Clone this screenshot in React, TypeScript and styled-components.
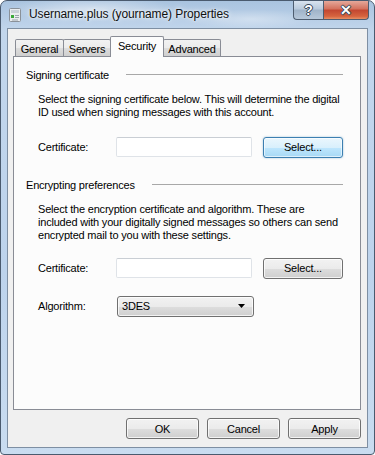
import React from "react";
import styled, { createGlobalStyle, css } from "styled-components";

const Global = createGlobalStyle`
  html, body { margin: 0; padding: 0; background: #ffffff; }
  body { font-family: "Liberation Sans", Arial, sans-serif; }
  * { box-sizing: border-box; }
`;

const Window = styled.div`
  width: 375px;
  height: 455px;
  border: 1px solid #4a5a6e;
  border-radius: 7px 7px 4px 4px;
  background: linear-gradient(180deg, #a9c3df 0px, #c2d6ec 30px, #bdd3ec 60%, #c9dcf0 100%);
  padding: 0 6px 6px 6px;
  display: flex;
  flex-direction: column;
  overflow: hidden;
`;

const TitleBar = styled.div`
  height: 27px;
  display: flex;
  align-items: flex-start;
  background: radial-gradient(ellipse 120px 18px at 90px 8px, rgba(255,255,255,0.45), rgba(255,255,255,0) 70%),
    radial-gradient(ellipse 90px 14px at 250px 18px, rgba(255,255,255,0.35), rgba(255,255,255,0) 70%);
  margin: 0 -6px;
  padding: 0 6px;
`;

const AppIcon = styled.svg`
  width: 16px;
  height: 16px;
  margin-top: 6px;
  flex-shrink: 0;
`;

const Title = styled.div`
  margin-left: 6px;
  margin-top: 6px;
  font-size: 12px;
  line-height: 15px;
  letter-spacing: -0.1px;
  color: #101010;
  white-space: nowrap;
  text-shadow: 0 0 6px rgba(255,255,255,0.9), 0 0 3px rgba(255,255,255,0.9);
`;

const CaptionButtons = styled.div`
  margin-left: auto;
  display: flex;
  margin-right: -1px;
`;

const CaptionButton = styled.div<{ $kind: "help" | "close" }>`
  height: 19px;
  display: flex;
  align-items: center;
  justify-content: center;
  border: 1px solid #4e5d70;
  border-top: none;
  ${(p) =>
    p.$kind === "help"
      ? css`
          width: 30px;
          border-radius: 0 0 0 4px;
          border-right: none;
          background: linear-gradient(180deg, #d8e3ef 0%, #b9cadc 45%, #9fb3c9 50%, #b7c8da 100%);
        `
      : css`
          width: 46px;
          border-radius: 0 0 4px 0;
          background: linear-gradient(180deg, #e5a89a 0%, #d3705c 45%, #c24630 50%, #d6643f 85%, #e89065 100%);
        `}
`;

const CaptionGlyph = styled.span`
  font-family: "Liberation Sans", Arial, sans-serif;
  font-weight: bold;
  font-size: 14px;
  line-height: 14px;
  color: #ffffff;
  text-shadow: 0 0 1px #2a3a4c, 1px 0 0 #3a4a5c, -1px 0 0 #3a4a5c, 0 1px 0 #3a4a5c, 0 -1px 0 #3a4a5c;
`;

const Client = styled.div`
  flex: 1;
  border: 1px solid #7e8fa3;
  background: #f0f0f0;
  padding: 7px 6px 6px 5px;
  display: flex;
  flex-direction: column;
  font-size: 11px;
  letter-spacing: -0.2px;
  color: #000;
`;

const TabRow = styled.div`
  height: 20px;
  display: flex;
  align-items: flex-end;
  padding-left: 2px;
  position: relative;
  z-index: 1;
`;

const Tab = styled.div<{ $active?: boolean; $width: number }>`
  width: ${(p) => p.$width}px;
  display: flex;
  align-items: center;
  justify-content: center;
  border: 1px solid #898c95;
  border-bottom: none;
  border-radius: 2px 2px 0 0;
  margin-right: -1px;
  white-space: nowrap;
  ${(p) =>
    p.$active
      ? css`
          height: 21px;
          margin-bottom: -1px;
          padding-bottom: 3px;
          background: #fcfcfc;
          position: relative;
          z-index: 2;
        `
      : css`
          height: 17px;
          padding-top: 1px;
          background: linear-gradient(180deg, #f2f2f2 0%, #ebebeb 50%, #dddddd 51%, #cfcfcf 100%);
        `}
`;

const Panel = styled.div`
  height: 354px;
  border: 1px solid #898c95;
  background: #fcfcfc;
  padding: 11px 17px 0 12px;
  display: flex;
  flex-direction: column;
`;

const GroupHeader = styled.div<{ $top?: number }>`
  display: flex;
  align-items: center;
  gap: 17px;
  height: 13px;
  line-height: 13px;
  margin-top: ${(p) => p.$top ?? 0}px;
`;

const GroupRule = styled.div`
  flex: 1;
  height: 1px;
  background: #a8a8a8;
  margin-top: -3px;
`;

const Description = styled.div`
  margin: 11px 0 0 12px;
  line-height: 13px;
  width: 304px;
`;

const FieldRow = styled.div<{ $top: number }>`
  display: flex;
  align-items: center;
  margin: ${(p) => p.$top}px 0 0 12px;
  height: 22px;
`;

const FieldLabel = styled.div`
  width: 78px;
`;

const TextBox = styled.div`
  width: 137px;
  height: 20px;
  margin-left: 1px;
  border: 1px solid #dfe3e8;
  border-top-color: #c9ced4;
  border-radius: 2px;
  background: #ffffff;
`;

const buttonBase = css`
  height: 21px;
  border: 1px solid #707070;
  border-radius: 3px;
  box-shadow: inset 0 0 0 1px rgba(255, 255, 255, 0.75);
  display: flex;
  align-items: center;
  justify-content: center;
  font-size: 11px;
  letter-spacing: -0.2px;
  color: #000;
`;

const PushButton = styled.div<{ $focused?: boolean; $width: number; $left?: number }>`
  ${buttonBase}
  width: ${(p) => p.$width}px;
  margin-left: ${(p) => p.$left ?? 0}px;
  ${(p) =>
    p.$focused
      ? css`
          border-color: #3c7fb1;
          background: linear-gradient(180deg, #eaf6fd 0%, #d9f0fc 50%, #bee6fd 51%, #a7d9f5 100%);
          box-shadow: inset 0 0 0 1px rgba(255, 255, 255, 0.6), 0 0 2px rgba(60, 127, 177, 0.5);
        `
      : css`
          background: linear-gradient(180deg, #f2f2f2 0%, #ebebeb 50%, #dddddd 51%, #cfcfcf 100%);
        `}
`;

const ComboBox = styled.div`
  ${buttonBase}
  width: 137px;
  margin-left: 1px;
  justify-content: space-between;
  padding: 0 8px 0 4px;
  background: linear-gradient(180deg, #f2f2f2 0%, #ebebeb 50%, #dddddd 51%, #cfcfcf 100%);
`;

const DropArrow = styled.svg`
  width: 7px;
  height: 4px;
`;

const ButtonBar = styled.div`
  display: flex;
  justify-content: flex-end;
  gap: 8px;
  margin-top: 8px;
`;

function WindowIcon() {
  return (
    <AppIcon viewBox="0 0 16 16">
      <rect x="2.5" y="1.5" width="11" height="13" rx="1" fill="#e9ecef" stroke="#8a9199" />
      <rect x="4" y="3" width="8" height="3" fill="#c9d0d8" />
      <rect x="4" y="8" width="3" height="3" fill="#3aa83a" />
      <rect x="8" y="8" width="4" height="1" fill="#9aa3ad" />
      <rect x="8" y="10" width="4" height="1" fill="#9aa3ad" />
      <rect x="5" y="12.5" width="6" height="1" fill="#9aa3ad" />
    </AppIcon>
  );
}

export default function App() {
  return (
    <>
      <Global />
      <Window>
        <TitleBar>
          <WindowIcon />
          <Title>Username.plus (yourname) Properties</Title>
          <CaptionButtons>
            <CaptionButton $kind="help">
              <CaptionGlyph>?</CaptionGlyph>
            </CaptionButton>
            <CaptionButton $kind="close">
              <CaptionGlyph>✕</CaptionGlyph>
            </CaptionButton>
          </CaptionButtons>
        </TitleBar>
        <Client>
          <TabRow>
            <Tab $width={49}>General</Tab>
            <Tab $width={48}>Servers</Tab>
            <Tab $active $width={54}>Security</Tab>
            <Tab $width={58}>Advanced</Tab>
          </TabRow>
          <Panel>
            <GroupHeader $top={1}>
              <span>Signing certificate</span>
              <GroupRule />
            </GroupHeader>
            <Description>
              Select the signing certificate below. This will determine the digital ID used when signing
              messages with this account.
            </Description>
            <FieldRow $top={17}>
              <FieldLabel>Certificate:</FieldLabel>
              <TextBox />
              <PushButton $focused $width={81} $left={11}>Select...</PushButton>
            </FieldRow>
            <GroupHeader $top={21}>
              <span>Encrypting preferences</span>
              <GroupRule />
            </GroupHeader>
            <Description>
              Select the encryption certificate and algorithm. These are included with your digitally signed
              messages so others can send encrypted mail to you with these settings.
            </Description>
            <FieldRow $top={15}>
              <FieldLabel>Certificate:</FieldLabel>
              <TextBox />
              <PushButton $width={81} $left={11}>Select...</PushButton>
            </FieldRow>
            <FieldRow $top={16}>
              <FieldLabel>Algorithm:</FieldLabel>
              <ComboBox>
                <span>3DES</span>
                <DropArrow viewBox="0 0 7 4">
                  <path d="M0 0 H7 L3.5 4 Z" fill="#000" />
                </DropArrow>
              </ComboBox>
            </FieldRow>
          </Panel>
          <ButtonBar>
            <PushButton $width={73}>OK</PushButton>
            <PushButton $width={73}>Cancel</PushButton>
            <PushButton $width={73}>Apply</PushButton>
          </ButtonBar>
        </Client>
      </Window>
    </>
  );
}
